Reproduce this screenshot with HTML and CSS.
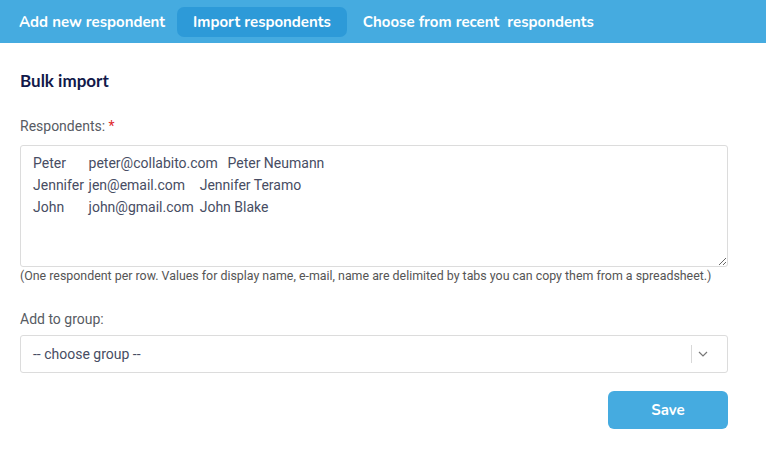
FILE: index.html
```html
<!DOCTYPE html>
<html>
<head>
<meta charset="utf-8">
<link rel="stylesheet" href="styles.css">
</head>
<body>
<nav class="tabs">
  <span class="tab">Add new respondent</span>
  <span class="tab active">Import respondents</span>
  <span class="tab tab-last">Choose from recent&nbsp; respondents</span>
</nav>
<main class="content">
  <h2 class="title">Bulk import</h2>
  <label class="label">Respondents: <span class="req">*</span></label>
  <textarea class="area">Peter	peter@collabito.com	Peter Neumann
Jennifer	jen@email.com	Jennifer Teramo
John	john@gmail.com	John Blake</textarea>
  <p class="hint">(One respondent per row. Values for display name, e-mail, name are delimited by tabs you can copy them from a spreadsheet.)</p>
  <label class="label group-label">Add to group:</label>
  <div class="select">
    <span class="select-text">-- choose group --</span>
    <span class="select-ind">
      <span class="sep"></span>
      <svg width="10" height="6" viewBox="0 0 10 6"><path d="M1 1 L5 5 L9 1" fill="none" stroke="#777" stroke-width="1.2"/></svg>
    </span>
  </div>
  <div class="actions"><button class="save">Save</button></div>
</main>
</body>
</html>
```
FILE: styles.css
```css
html, body { margin: 0; padding: 0; background: #fff; }
body { font-family: Roboto, "Liberation Sans", sans-serif; width: 766px; height: 459px; overflow: hidden; }
.tabs {
  height: 43px; background: #45abe0; display: flex; align-items: center;
  padding-left: 8px; gap: 1px; box-sizing: border-box;
}
.tab {
  font-family: "Nunito", "Lato", "Open Sans", sans-serif; font-weight: 700; font-size: 15px;
  color: #fff; padding: 0 11px; height: 30px; line-height: 30px; border-radius: 7px;
}
.tab.active { background: #2d9ad8; padding: 0 16px; }
.tab-last { padding-left: 15px; }
.content { padding: 0 38px 0 20px; }
.title { margin: 0; padding-top: 27px; font-family: "Lato", "Open Sans", sans-serif; font-size: 17px; font-weight: 700; color: #12194a; line-height: 22px; }
.label { display: block; margin-top: 25px; font-size: 14px; color: #575b63; line-height: 18px; }
.req { color: #e0282c; }
.area {
  display: block; margin-top: 10px; width: 708px; height: 122px; box-sizing: border-box;
  border: 1px solid #dcdcdc; border-radius: 3px; padding: 6px 12px;
  font-family: Roboto, sans-serif; font-size: 14px; line-height: 22px; color: #474d63;
  resize: vertical; tab-size: 8; outline: none;
}
.hint { margin: 2px 0 0; font-size: 12.4px; color: #555; line-height: 14px; white-space: nowrap; }
.group-label { margin-top: 27px; }
.select {
  margin-top: 7px; height: 38px; box-sizing: border-box; width: 708px;
  border: 1px solid #dcdcdc; border-radius: 3px; display: flex; align-items: center;
  justify-content: space-between; padding-left: 12px;
}
.select-text { font-size: 14px; color: #474d63; }
.select-ind { display: flex; align-items: center; height: 100%; }
.sep { width: 1px; height: 18px; background: #d8d8d8; margin-right: 6px; }
.select-ind svg { margin-right: 19px; }
.actions { display: flex; justify-content: flex-end; margin-top: 18px; }
.save {
  width: 120px; height: 38px; background: #45abe0; color: #fff; border: none; border-radius: 6px;
  font-family: "Nunito", "Lato", "Open Sans", sans-serif; font-weight: 700; font-size: 15px;
}
```
